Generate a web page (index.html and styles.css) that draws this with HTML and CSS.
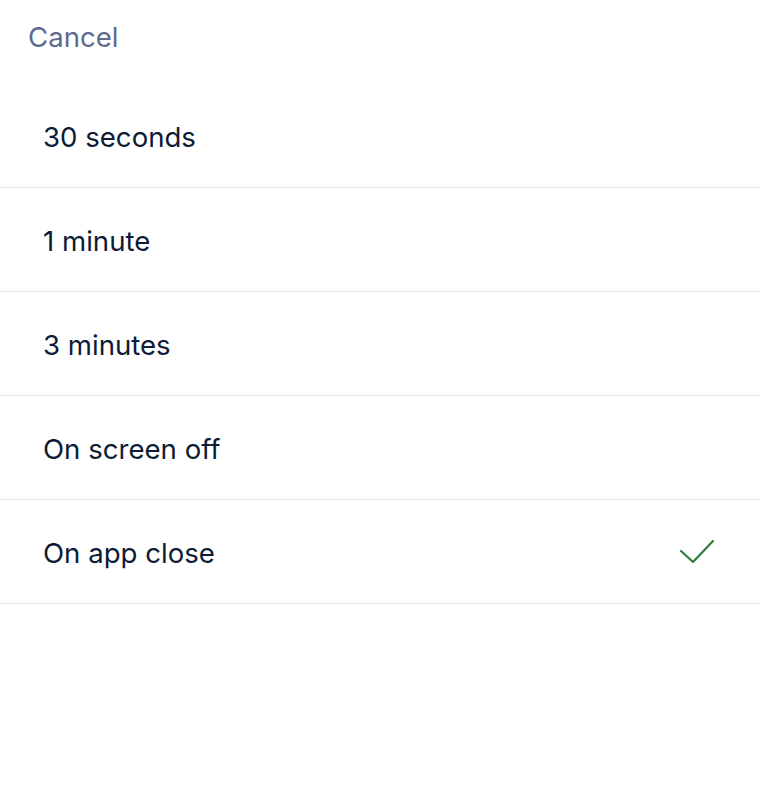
FILE: index.html
```html
<!DOCTYPE html>
<html>
<head>
<meta charset="utf-8">
<link rel="stylesheet" href="styles.css">
</head>
<body>
<div class="sheet">
  <div class="header"><span class="cancel">Cancel</span></div>
  <ul class="list">
    <li class="row"><span class="label">30 seconds</span></li>
    <li class="row"><span class="label">1 minute</span></li>
    <li class="row"><span class="label">3 minutes</span></li>
    <li class="row"><span class="label">On screen off</span></li>
    <li class="row"><span class="label">On app close</span>
      <svg class="check" width="40" height="30" viewBox="0 0 40 30"><path d="M5 14 L17 25 L37 4" fill="none" stroke="#2f7d3a" stroke-width="2.2" stroke-linecap="round" stroke-linejoin="round"/></svg>
    </li>
  </ul>
</div>
</body>
</html>
```
FILE: styles.css
```css
html, body {
  margin: 0;
  padding: 0;
  background: #ffffff;
}
body {
  font-family: Inter, "Noto Sans", sans-serif;
  -webkit-font-smoothing: antialiased;
}
.sheet {
  width: 759px;
  height: 791px;
}
.header {
  height: 84px;
  display: flex;
  align-items: center;
  padding-left: 28px;
  box-sizing: border-box;
  padding-bottom: 10px;
}
.cancel {
  font-size: 27.6px;
  color: #5d6b8e;
}
.list {
  list-style: none;
  margin: 0;
  padding: 0;
}
.row {
  height: 104px;
  box-sizing: border-box;
  border-bottom: 1.5px solid #e2e2e4;
  display: flex;
  align-items: center;
  justify-content: space-between;
  padding: 0 43px;
}
.label {
  font-size: 27.6px;
  color: #0e1b36;
  padding-top: 2px;
}
.check {
  display: block;
}
```
